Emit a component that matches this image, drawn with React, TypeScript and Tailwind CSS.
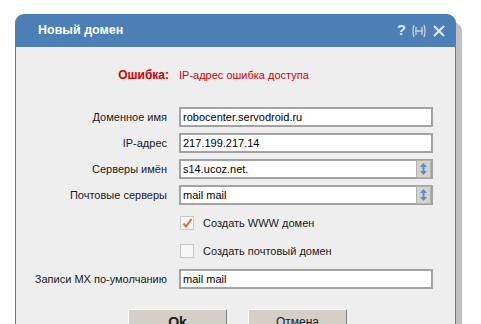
import React from "react";

const font = { fontFamily: '"Liberation Sans", Arial, sans-serif' };

function Label({ children }: { children: React.ReactNode }) {
  return (
    <div className="w-[152px] shrink-0 pr-[1px] text-right text-[11px] leading-[16px] text-[#1a1a1a]">
      {children}
    </div>
  );
}

function TextInput({ value }: { value: string }) {
  return (
    <div className="ml-[11px] flex h-[20px] w-[254px] items-center border-2 border-[#a3a3a3] bg-white pl-[2px] text-[11px] text-black">
      {value}
    </div>
  );
}

function SelectInput({ value }: { value: string }) {
  return (
    <div className="ml-[11px] flex h-[20px] w-[254px] items-center border-2 border-[#a3a3a3] bg-white text-[11px] text-black">
      <span className="flex-1 pl-[2px]">{value}</span>
      <div className="flex h-[18px] w-[15px] items-center justify-center border border-[#b5b3ad] bg-[#d6d3cc]">
        <svg width="9" height="14" viewBox="0 0 9 14">
          <path d="M4.5 1 L8 5 L5.5 5 L5.5 9 L8 9 L4.5 13 L1 9 L3.5 9 L3.5 5 L1 5 Z" fill="#5a8cd4" />
        </svg>
      </div>
    </div>
  );
}

function Row({ label, children }: { label?: string; children: React.ReactNode }) {
  return (
    <div className="flex items-center">
      <Label>{label}</Label>
      {children}
    </div>
  );
}

function Check({ checked, label }: { checked?: boolean; label: string }) {
  return (
    <div className="flex h-[20px] items-center pl-[164px]">
      <div className="flex h-[14px] w-[14px] items-center justify-center border border-[#c8c8c8] bg-[#f7f7f7]">
        {checked && (
          <svg width="11" height="10" viewBox="0 0 11 10">
            <path d="M1.5 5.5 L4 8.5 L9.5 1" fill="none" stroke="#e8653a" strokeWidth="2" />
          </svg>
        )}
      </div>
      <span className="ml-[9px] text-[11px] text-[#1a1a1a]">{label}</span>
    </div>
  );
}

export default function App() {
  return (
    <div className="h-[324px] w-[481px] overflow-hidden bg-white pl-[15px] pt-[14px]" style={font}>
      <div className="w-[441px] rounded-t-[9px] shadow-[6px_8px_0_0_#c0c0c0]">
        {/* Header */}
        <div className="flex h-[33px] items-center justify-between rounded-t-[9px] bg-[#4c7fb5] pl-[23px] pr-[10px]">
          <span className="text-[12.5px] font-bold text-white">Новый домен</span>
          <div className="flex items-center gap-[5px] text-[#e4e8ee]">
            <span className="text-[15px] font-bold">?</span>
            <svg width="16" height="14" viewBox="0 0 16 14" className="text-[#c9d3df]">
              <path d="M3 1 Q1 7 3 13 M13 1 Q15 7 13 13 M4 7 H12 M5 3 V11 M11 3 V11" fill="none" stroke="currentColor" strokeWidth="1.3" />
            </svg>
            <svg width="14" height="14" viewBox="0 0 14 14">
              <path d="M2 2 L12 12 M12 2 L2 12" stroke="currentColor" strokeWidth="2" />
            </svg>
          </div>
        </div>

        {/* Body */}
        <div className="h-[300px] border-x border-[#4c7fb5] bg-[#eeeeee] pt-[20px]">
          <div className="flex h-[16px] items-center text-[11px] text-[#d40000]">
            <div className="w-[153px] text-right text-[12px] font-bold">Ошибка:</div>
            <span className="ml-[10px]">IP-адрес ошибка доступа</span>
          </div>

          <div className="mt-[24px] flex flex-col gap-[6px]">
            <Row label="Доменное имя">
              <TextInput value="robocenter.servodroid.ru" />
            </Row>
            <Row label="IP-адрес">
              <TextInput value="217.199.217.14" />
            </Row>
            <Row label="Серверы имён">
              <SelectInput value="s14.ucoz.net." />
            </Row>
            <Row label="Почтовые серверы">
              <SelectInput value="mail mail" />
            </Row>
          </div>

          <div className="mt-[8px] flex flex-col gap-[8px]">
            <Check checked label="Создать WWW домен" />
            <Check label="Создать почтовый домен" />
          </div>

          <div className="mt-[8px]">
            <Row label="Записи MX по-умолчанию">
              <TextInput value="mail mail" />
            </Row>
          </div>

          <div className="mt-[20px] flex gap-[21px] pl-[112px]">
            <button className="h-[26px] w-[99px] border border-b-[#808080] border-l-white border-r-[#808080] border-t-white bg-[#d4d0c8] text-[14px] font-bold text-[#1a1a1a]">
              Ok
            </button>
            <button className="h-[26px] w-[99px] border border-b-[#808080] border-l-white border-r-[#808080] border-t-white bg-[#d4d0c8] text-[12px] text-[#1a1a1a]">
              Отмена
            </button>
          </div>
        </div>
      </div>
    </div>
  );
}
